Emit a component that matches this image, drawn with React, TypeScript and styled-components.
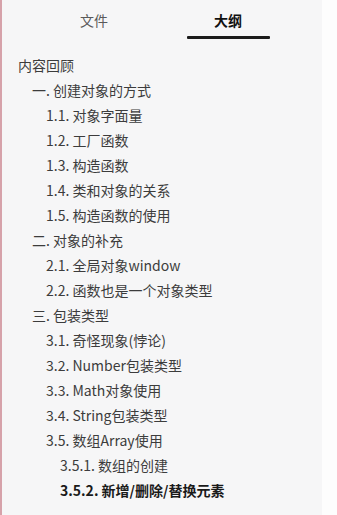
import React, { useState } from "react";
import styled, { createGlobalStyle } from "styled-components";

const GlobalStyle = createGlobalStyle`
  html, body {
    margin: 0;
    padding: 0;
    height: 100%;
    background: #ffffff;
  }
  #root {
    height: 100%;
  }
  * {
    box-sizing: border-box;
  }
`;

const Page = styled.div`
  display: flex;
  width: 100%;
  height: 515px;
  overflow: hidden;
  font-family: "Noto Sans CJK SC", "Microsoft YaHei", sans-serif;
`;

const Sidebar = styled.div`
  width: 322px;
  height: 100%;
  display: flex;
  flex-direction: column;
  background: #f6f6f7;
  border-left: 2px solid #d6a2aa;
  box-shadow: 1px 0 3px rgba(0, 0, 0, 0.06);
`;

const RightStrip = styled.div`
  flex: 1;
  background: #fdfdfd;
`;

const TabBar = styled.div`
  display: flex;
  height: 40px;
  padding: 0 27px 0 25px;
`;

const Tab = styled.div<{ $active?: boolean }>`
  flex: 1;
  display: flex;
  flex-direction: column;
  align-items: center;
  padding-top: 10px;
  cursor: pointer;
`;

const TabLabel = styled.span<{ $active?: boolean }>`
  font-size: 14px;
  line-height: 20px;
  color: ${(p) => (p.$active ? "#111111" : "#5a5a5a")};
  font-weight: ${(p) => (p.$active ? 700 : 400)};
`;

const Indicator = styled.div<{ $active?: boolean }>`
  width: 83px;
  height: 3px;
  margin-top: 6px;
  border-radius: 1px;
  background: ${(p) => (p.$active ? "#1b1b1b" : "transparent")};
`;

const Outline = styled.ul`
  list-style: none;
  margin: 0;
  padding: 13px 0 0 16px;
`;

const Item = styled.li<{ $level: number; $current?: boolean }>`
  height: 25px;
  line-height: 25px;
  padding-left: ${(p) => p.$level * 14}px;
  font-size: 14px;
  white-space: nowrap;
  color: ${(p) => (p.$current ? "#1a1a1a" : "#3c3c3c")};
  font-weight: ${(p) => (p.$current ? 700 : 400)};
`;

const outline: { text: string; level: number }[] = [
  { text: "内容回顾", level: 0 },
  { text: "一. 创建对象的方式", level: 1 },
  { text: "1.1. 对象字面量", level: 2 },
  { text: "1.2. 工厂函数", level: 2 },
  { text: "1.3. 构造函数", level: 2 },
  { text: "1.4. 类和对象的关系", level: 2 },
  { text: "1.5. 构造函数的使用", level: 2 },
  { text: "二. 对象的补充", level: 1 },
  { text: "2.1. 全局对象window", level: 2 },
  { text: "2.2. 函数也是一个对象类型", level: 2 },
  { text: "三. 包装类型", level: 1 },
  { text: "3.1. 奇怪现象(悖论)", level: 2 },
  { text: "3.2. Number包装类型", level: 2 },
  { text: "3.3. Math对象使用", level: 2 },
  { text: "3.4. String包装类型", level: 2 },
  { text: "3.5. 数组Array使用", level: 2 },
  { text: "3.5.1. 数组的创建", level: 3 },
  { text: "3.5.2. 新增/删除/替换元素", level: 3 },
];

export default function App() {
  const [tab, setTab] = useState("outline");
  const current = outline.length - 1;

  return (
    <>
      <GlobalStyle />
      <Page>
        <Sidebar>
          <TabBar>
            <Tab onClick={() => setTab("files")}>
              <TabLabel $active={tab === "files"}>文件</TabLabel>
              <Indicator $active={tab === "files"} />
            </Tab>
            <Tab onClick={() => setTab("outline")}>
              <TabLabel $active={tab === "outline"}>大纲</TabLabel>
              <Indicator $active={tab === "outline"} />
            </Tab>
          </TabBar>
          <Outline>
            {outline.map((item, i) => (
              <Item key={item.text} $level={item.level} $current={i === current}>
                {item.text}
              </Item>
            ))}
          </Outline>
        </Sidebar>
        <RightStrip />
      </Page>
    </>
  );
}
